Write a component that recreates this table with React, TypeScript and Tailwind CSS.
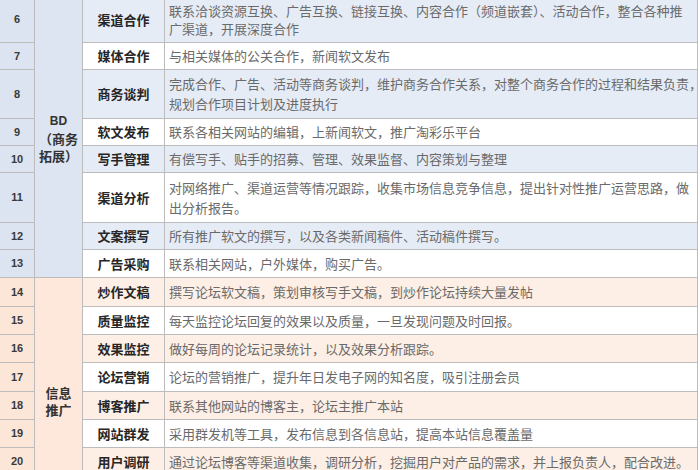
import React from 'react';

type Row = {
  no: number;
  name: string;
  lines: string[];
  h: number;
  tint: boolean;
};

const bdRows: Row[] = [
  {
    no: 6,
    name: '渠道合作',
    lines: ['联系洽谈资源互换、广告互换、链接互换、内容合作（频道嵌套）、活动合作，整合各种推', '广渠道，开展深度合作'],
    h: 46,
    tint: true,
  },
  { no: 7, name: '媒体合作', lines: ['与相关媒体的公关合作，新闻软文发布'], h: 27, tint: false },
  {
    no: 8,
    name: '商务谈判',
    lines: ['完成合作、广告、活动等商务谈判，维护商务合作关系，对整个商务合作的过程和结果负责，', '规划合作项目计划及进度执行'],
    h: 49,
    tint: true,
  },
  { no: 9, name: '软文发布', lines: ['联系各相关网站的编辑，上新闻软文，推广淘彩乐平台'], h: 27, tint: false },
  { no: 10, name: '写手管理', lines: ['有偿写手、贴手的招募、管理、效果监督、内容策划与整理'], h: 27, tint: true },
  {
    no: 11,
    name: '渠道分析',
    lines: ['对网络推广、渠道运营等情况跟踪，收集市场信息竞争信息，提出针对性推广运营思路，做', '出分析报告。'],
    h: 50,
    tint: false,
  },
  { no: 12, name: '文案撰写', lines: ['所有推广软文的撰写，以及各类新闻稿件、活动稿件撰写。'], h: 27, tint: true },
  { no: 13, name: '广告采购', lines: ['联系相关网站，户外媒体，购买广告。'], h: 28, tint: false },
];

const infoRows: Row[] = [
  { no: 14, name: '炒作文稿', lines: ['撰写论坛软文稿，策划审核写手文稿，到炒作论坛持续大量发帖'], h: 29, tint: true },
  { no: 15, name: '质量监控', lines: ['每天监控论坛回复的效果以及质量，一旦发现问题及时回报。'], h: 28, tint: false },
  { no: 16, name: '效果监控', lines: ['做好每周的论坛记录统计，以及效果分析跟踪。'], h: 28, tint: true },
  { no: 17, name: '论坛营销', lines: ['论坛的营销推广，提升年日发电子网的知名度，吸引注册会员'], h: 29, tint: false },
  { no: 18, name: '博客推广', lines: ['联系其他网站的博客主，论坛主推广本站'], h: 28, tint: true },
  { no: 19, name: '网站群发', lines: ['采用群发机等工具，发布信息到各信息站，提高本站信息覆盖量'], h: 28, tint: false },
  { no: 20, name: '用户调研', lines: ['通过论坛博客等渠道收集，调研分析，挖掘用户对产品的需求，并上报负责人，配合改进。'], h: 28, tint: true },
  { no: 21, name: '', lines: [''], h: 48, tint: false },
];

const cell = 'border border-[#bcbcbc] p-0';

function Section({ rows, label, blue }: { rows: Row[]; label: React.ReactNode; blue: boolean }) {
  const numBg = blue ? 'bg-[#dbe4f0]' : 'bg-[#fbe6d8]';
  const catBg = blue ? 'bg-[#dce5f1]' : 'bg-[#fde8db]';
  const tintBg = blue ? 'bg-[#e6ecf6]' : 'bg-[#fdefe5]';
  return (
    <>
      {rows.map((r, i) => (
        <tr key={r.no} style={{ height: r.h }}>
          <td className={`${cell} ${numBg} text-center text-[11px] font-bold text-[#3a3a3a] font-['Liberation_Sans',sans-serif]`}>
            {r.no}
          </td>
          {i === 0 && (
            <td
              rowSpan={rows.length}
              className={`${cell} ${catBg} text-center align-middle text-[13px] leading-[17px] font-bold text-[#333]`}
            >
              {label}
            </td>
          )}
          <td className={`${cell} ${r.tint ? tintBg : 'bg-white'} text-center text-[13px] font-bold text-[#262626]`}>
            {r.name}
          </td>
          <td
            className={`${cell} ${r.tint ? tintBg : 'bg-white'} pl-[4px] text-[13px] ${
              r.no === 6 ? 'leading-[18px]' : 'leading-[20px]'
            } text-[#6a6a6a] whitespace-nowrap`}
          >
            {r.lines.map((l, k) => (
              <div key={k}>{l}</div>
            ))}
          </td>
        </tr>
      ))}
    </>
  );
}

export default function App() {
  return (
    <div className="w-[700px] h-[470px] overflow-hidden bg-white font-['Noto_Sans_CJK_SC',sans-serif]">
      <table className="table-fixed border-collapse w-[698px] -mt-[4px] -ml-[1px]">
        <colgroup>
          <col className="w-[35px]" />
          <col className="w-[48px]" />
          <col className="w-[82px]" />
          <col className="w-[533px]" />
        </colgroup>
        <tbody>
          <Section
            rows={bdRows}
            blue
            label={
              <>
                <span className="font-['Liberation_Sans',sans-serif] text-[12px]">BD</span>
                <br />
                （商务
                <br />
                拓展）
              </>
            }
          />
          <Section
            rows={infoRows}
            blue={false}
            label={
              <>
                信息
                <br />
                推广
              </>
            }
          />
        </tbody>
      </table>
    </div>
  );
}
